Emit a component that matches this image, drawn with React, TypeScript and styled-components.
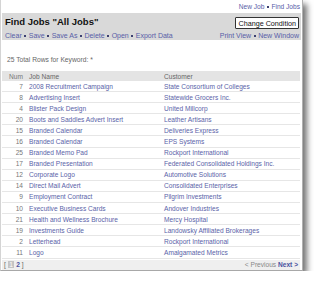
import styled, { createGlobalStyle } from "styled-components";

const GlobalStyle = createGlobalStyle`
  html, body {
    margin: 0;
    padding: 0;
    background: #fff;
  }
  body {
    font-family: "Liberation Sans", Arial, sans-serif;
  }
`;

const jobs = [
  { num: 7, name: "2008 Recruitment Campaign", customer: "State Consortium of Colleges" },
  { num: 8, name: "Advertising Insert", customer: "Statewide Grocers Inc." },
  { num: 4, name: "Blister Pack Design", customer: "United Millcorp" },
  { num: 20, name: "Boots and Saddles Advert Insert", customer: "Leather Artisans" },
  { num: 15, name: "Branded Calendar", customer: "Deliveries Express" },
  { num: 16, name: "Branded Calendar", customer: "EPS Systems" },
  { num: 25, name: "Branded Memo Pad", customer: "Rockport International" },
  { num: 17, name: "Branded Presentation", customer: "Federated Consolidated Holdings Inc." },
  { num: 12, name: "Corporate Logo", customer: "Automotive Solutions" },
  { num: 14, name: "Direct Mail Advert", customer: "Consolidated Enterprises" },
  { num: 9, name: "Employment Contract", customer: "Pilgrim Investments" },
  { num: 10, name: "Executive Business Cards", customer: "Andover Industries" },
  { num: 21, name: "Health and Wellness Brochure", customer: "Mercy Hospital" },
  { num: 19, name: "Investments Guide", customer: "Landowsky Affiliated Brokerages" },
  { num: 2, name: "Letterhead", customer: "Rockport International" },
  { num: 11, name: "Logo", customer: "Amalgamated Metrics" },
];

const Dotted = ({ items }: { items: string[] }) => (
  <>
    {items.map((t, i) => (
      <span key={t}>
        {i > 0 && <Dot />}
        <Link>{t}</Link>
      </span>
    ))}
  </>
);

const App = () => {
  return (
    <>
      <GlobalStyle />
      <Panel>
        <TopLinks>
          <Dotted items={["New Job", "Find Jobs"]} />
        </TopLinks>
        <HeaderBand>
          <TitleRow>
            <Title>Find Jobs "All Jobs"</Title>
            <ConditionBtn>Change Condition</ConditionBtn>
          </TitleRow>
          <ActionRow>
            <div>
              <Dotted items={["Clear", "Save", "Save As", "Delete", "Open", "Export Data"]} />
            </div>
            <div>
              <Dotted items={["Print View", "New Window"]} />
            </div>
          </ActionRow>
        </HeaderBand>
        <Summary>25 Total Rows for Keyword: *</Summary>
        <Table>
          <HeadRow>
            <NumCell>Num</NumCell>
            <Cell>Job Name</Cell>
            <Cell>Customer</Cell>
          </HeadRow>
          {jobs.map((j) => (
            <Row key={j.num}>
              <NumCell>{j.num}</NumCell>
              <Cell $link>{j.name}</Cell>
              <Cell $link>{j.customer}</Cell>
            </Row>
          ))}
          <Pager>
            <Pages>
              [ <Current>1</Current> <PageLink>2</PageLink> ]
            </Pages>
            <Pages>
              <Muted>&lt; Previous</Muted> <PageLink>Next &gt;</PageLink>
            </Pages>
          </Pager>
        </Table>
      </Panel>
    </>
  );
};

export default App;

const Panel = styled.div`
  width: 303px;
  box-sizing: border-box;
  background: #fff;
  border-left: 1px solid #d4d4d4;
  border-right: 1px solid #b0b0b0;
  border-bottom: 1px solid #a8a8a8;
  box-shadow: 4px 4px 6px rgba(0, 0, 0, 0.55);
  padding: 0 1px 0 1px;
`;

const TopLinks = styled.div`
  height: 13px;
  display: flex;
  align-items: center;
  justify-content: flex-end;
  padding-right: 1px;
  font-size: 6.6px;
`;

const Link = styled.span`
  color: #5860a8;
`;

const Dot = styled.span`
  display: inline-block;
  width: 2px;
  height: 2px;
  margin: 0 2.5px;
  vertical-align: middle;
  background: #3c4070;
`;

const HeaderBand = styled.div`
  background: #d9d9d9;
  height: 27px;
  padding: 0 2px 0 3px;
`;

const TitleRow = styled.div`
  display: flex;
  align-items: center;
  justify-content: space-between;
  height: 17px;
`;

const Title = styled.div`
  font-size: 9.5px;
  font-weight: bold;
  color: #111;
`;

const ConditionBtn = styled.div`
  box-sizing: border-box;
  height: 12px;
  margin-top: 3px;
  padding: 0 2px;
  display: flex;
  align-items: center;
  background: #fff;
  border: 1px solid #333;
  border-radius: 1px;
  font-size: 7.2px;
  color: #111;
`;

const ActionRow = styled.div`
  display: flex;
  justify-content: space-between;
  align-items: center;
  height: 10px;
  font-size: 7px;
`;

const Summary = styled.div`
  margin-top: 15px;
  height: 10px;
  line-height: 10px;
  padding-left: 5px;
  font-size: 6.7px;
  color: #666;
`;

const Table = styled.div`
  margin-top: 6px;
  margin-right: 1px;
  font-size: 6.6px;
`;

const gridCols = `
  display: grid;
  grid-template-columns: 21px 129px 1fr;
  column-gap: 6px;
  align-items: center;
`;

const HeadRow = styled.div`
  ${gridCols}
  height: 10px;
  background: #e4e4e4;
  color: #666;
`;

const Row = styled.div`
  ${gridCols}
  height: 10.1px;
  border-bottom: 1px solid #e6e6e6;
`;

const NumCell = styled.div`
  text-align: right;
  color: #777;
`;

const Cell = styled.div<{ $link?: boolean }>`
  white-space: nowrap;
  color: ${(p) => (p.$link ? "#5a63a8" : "#666")};
`;

const Pager = styled.div`
  display: flex;
  justify-content: space-between;
  align-items: center;
  height: 10px;
  margin-top: 1px;
  padding: 0 2px;
  background: #efefef;
  font-size: 6.6px;
`;

const Pages = styled.div`
  color: #666;
`;

const Current = styled.span`
  display: inline-block;
  padding: 0 1.5px;
  background: #c4c4c4;
  color: #fff;
`;

const PageLink = styled.span`
  color: #4a52a0;
  font-weight: bold;
`;

const Muted = styled.span`
  color: #888;
`;
